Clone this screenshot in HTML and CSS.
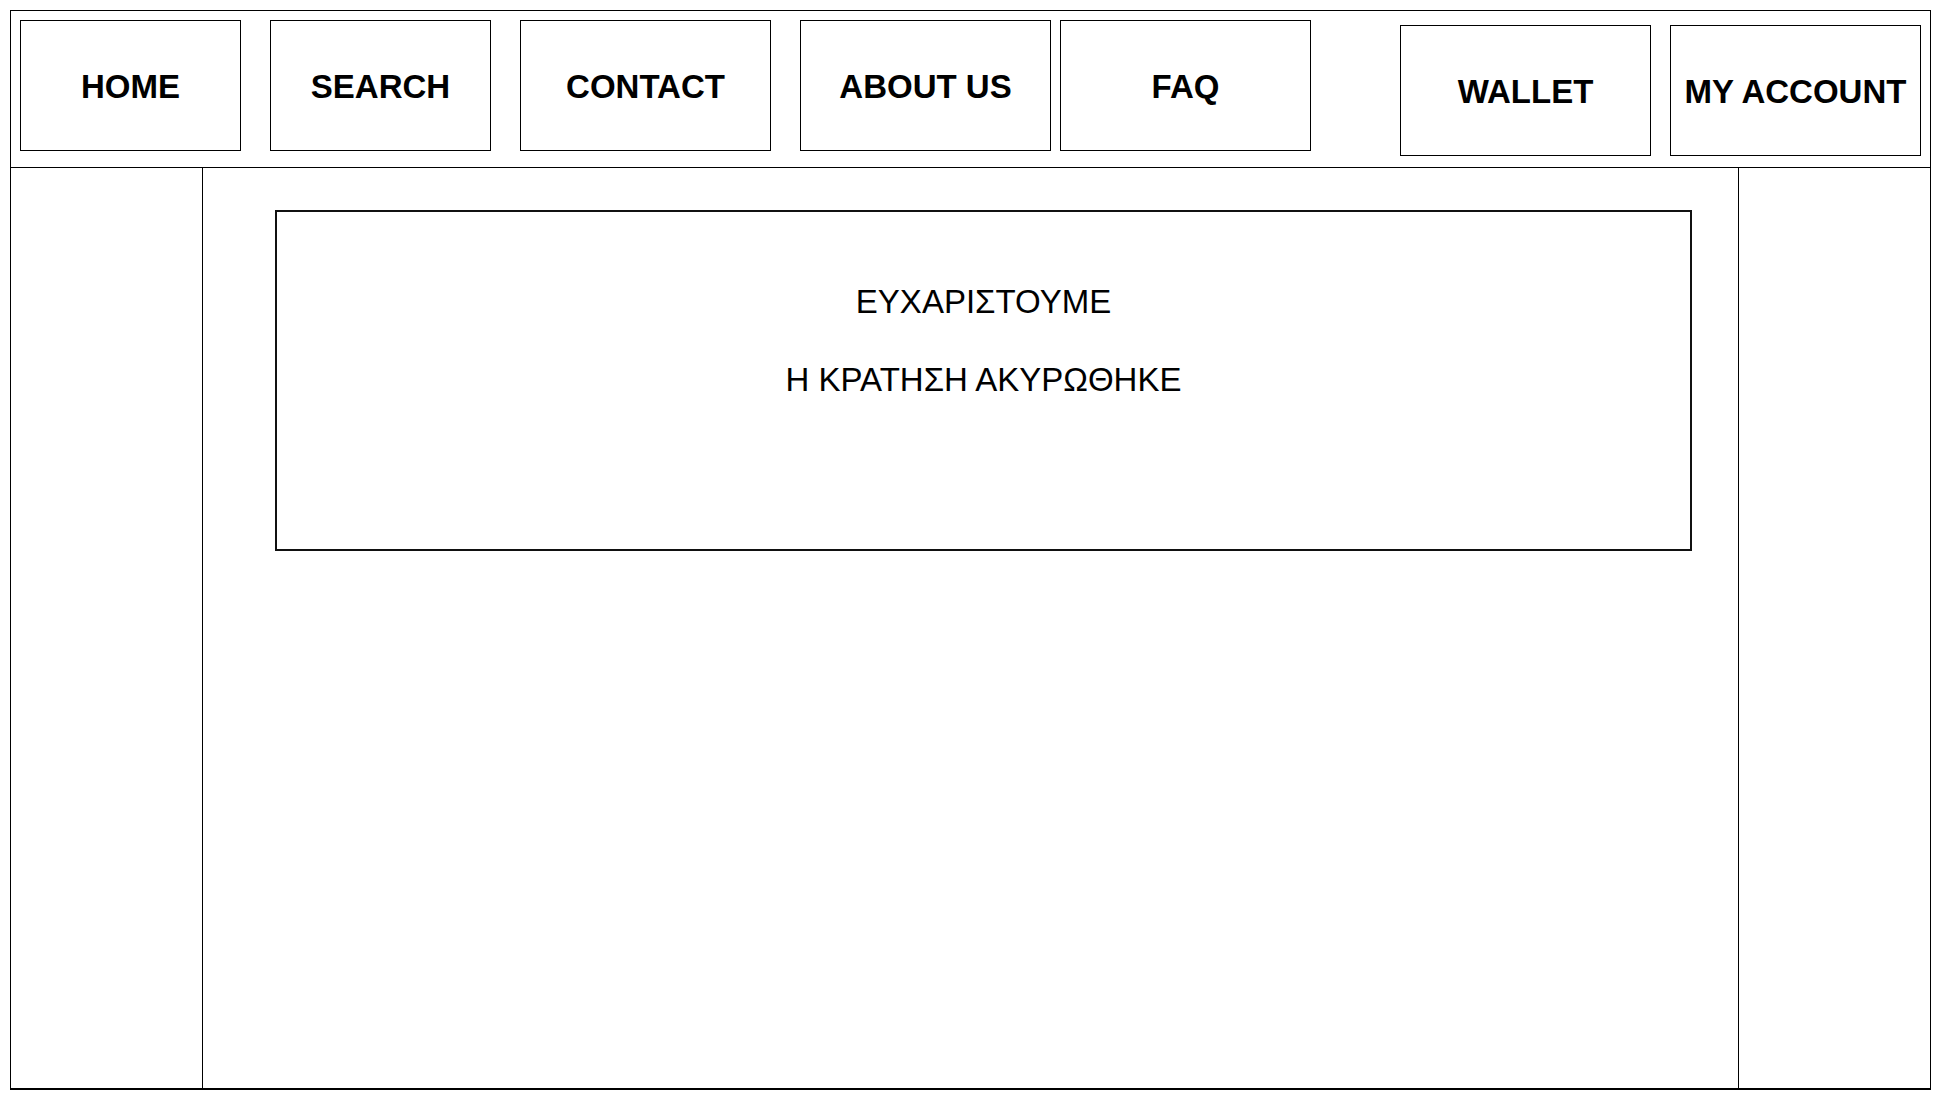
FILE: index.html
```html
<!DOCTYPE html>
<html lang="el">
<head>
<meta charset="utf-8">
<title>Ακύρωση κράτησης</title>
<link rel="stylesheet" href="styles.css">
</head>
<body>
<div class="frame">
  <header class="header">
    <nav class="nav-left">
      <a class="nav-btn nav-sm" href="#">HOME</a>
      <a class="nav-btn nav-sm" href="#">SEARCH</a>
      <a class="nav-btn" href="#">CONTACT</a>
      <a class="nav-btn" href="#">ABOUT US</a>
      <a class="nav-btn nav-tight" href="#">FAQ</a>
    </nav>
    <nav class="nav-right">
      <a class="nav-btn" href="#">WALLET</a>
      <a class="nav-btn" href="#">MY ACCOUNT</a>
    </nav>
  </header>
  <div class="body">
    <aside class="side side-left"></aside>
    <main class="main">
      <section class="message">
        <p class="msg-line">ΕΥΧΑΡΙΣΤΟΥΜΕ</p>
        <p class="msg-line">Η ΚΡΑΤΗΣΗ ΑΚΥΡΩΘΗΚΕ</p>
      </section>
    </main>
    <aside class="side side-right"></aside>
  </div>
</div>
</body>
</html>
```

FILE: styles.css
```css
* {
  box-sizing: border-box;
}

html, body {
  margin: 0;
  padding: 0;
  background: #ffffff;
}

body {
  font-family: "Liberation Sans", Arial, sans-serif;
  color: #000;
}

.frame {
  margin: 10px 0 0 10px;
  width: 1921px;
  height: 1080px;
  border: 1px solid #000;
  border-bottom-width: 2px;
  display: flex;
  flex-direction: column;
}

.header {
  height: 157px;
  flex: none;
  border-bottom: 1px solid #000;
  display: flex;
  justify-content: space-between;
  align-items: flex-start;
  padding: 9px 9px 0 9px;
}

.nav-left {
  display: flex;
  gap: 29px;
}

.nav-right {
  display: flex;
  gap: 19px;
  margin-top: 5px;
}

.nav-btn {
  width: 251px;
  height: 131px;
  border: 1px solid #000;
  display: flex;
  align-items: center;
  justify-content: center;
  padding-top: 2px;
  font-size: 33px;
  font-weight: bold;
  color: #000;
  text-decoration: none;
  white-space: nowrap;
}

.nav-sm {
  width: 221px;
}

.nav-tight {
  margin-left: -20px;
}

.body {
  flex: 1;
  display: flex;
}

.side {
  width: 192px;
  flex: none;
}

.side-left {
  border-right: 1px solid #000;
}

.side-right {
  border-left: 1px solid #000;
}

.main {
  flex: 1;
  padding: 42px 46px 0 72px;
}

.message {
  height: 341px;
  border: 2px solid #111;
  display: flex;
  flex-direction: column;
  align-items: center;
  gap: 41px;
  padding-top: 71px;
}

.msg-line {
  margin: 0;
  font-size: 33px;
  line-height: 37px;
}
```
